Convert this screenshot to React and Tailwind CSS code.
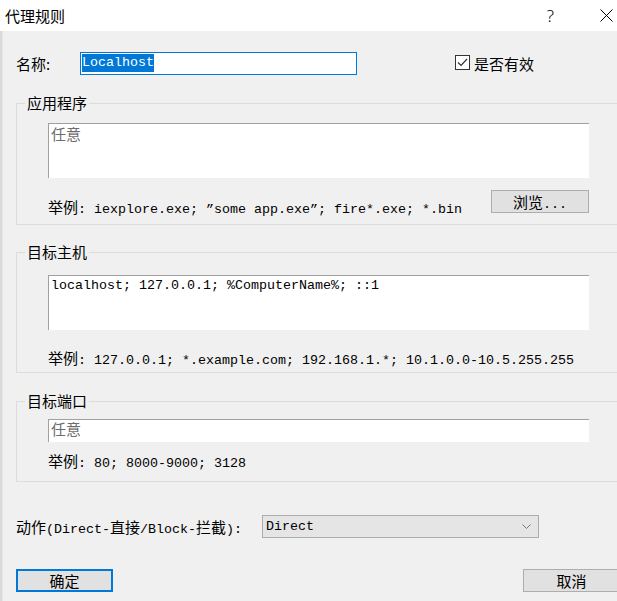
import React from 'react';

const cjk = "font-['Noto_Sans_CJK_SC',sans-serif]";
const mono = "font-['Liberation_Mono','Noto_Sans_CJK_SC',monospace] text-[13.33px] leading-[16px]";

// CJK characters inside the monospace lines are wider than the latin ones
const Zh = ({ children }) => (
  <span className="font-['Noto_Sans_CJK_SC',sans-serif] text-[15px] leading-[16px]">{children}</span>
);

const GroupBox = ({ title, children, className }) => (
  <fieldset className={`w-[625px] border border-[#dcdcdc] ${className}`}>
    <legend className={`ml-[8px] px-[2px] ${cjk} text-[15px] leading-[20px] text-black`}>{title}</legend>
    <div className="pl-[31px]">{children}</div>
  </fieldset>
);

const Box = ({ className, children }) => (
  <div className={`w-[541px] bg-white border-l border-t border-[#a0a0a0] pl-[2px] ${mono} ${className}`}>
    {children}
  </div>
);

export default function App() {
  return (
    <div className="w-[617px] h-[601px] overflow-hidden bg-[#f0f0f0] flex flex-col text-black">
      {/* title bar */}
      <div className="h-[31px] bg-white flex items-center shrink-0">
        <span className={`ml-[5px] ${cjk} text-[15px] leading-[20px]`}>代理规则</span>
        <span className="ml-auto mr-[63px] font-['Noto_Sans',sans-serif] font-light text-[17px] leading-[20px]">?</span>
      </div>
      <svg className="absolute left-[600px] top-[9px]" width="13" height="13" viewBox="0 0 13 13">
        <path d="M0.5 0.5L12.5 12.5M12.5 0.5L0.5 12.5" stroke="#000" strokeWidth="1" />
      </svg>

      <div className="flex flex-1">
        <div className="w-[3px] bg-[#dadada] border-r border-[#e6e6e6] shrink-0" />
        <div className="pl-[13px] flex flex-col">
          {/* name row */}
          <div className="mt-[21px] flex items-center h-[23px]">
            <span className={`w-[64px] ${cjk} text-[15px] leading-[20px]`}>名称:</span>
            <div className={`w-[277px] h-[23px] bg-white border border-[#0078d7] pl-[1px] pt-[1px] ${mono}`}>
              <span className="bg-[#0078d7] text-white inline-block leading-[18px]">Localhost</span>
            </div>
            <div className="ml-[98px] -mt-[2px] w-[15px] h-[15px] border border-[#333333] bg-white flex items-center justify-center">
              <svg width="11" height="9" viewBox="0 0 11 9">
                <path d="M1 4.5L4 7.5L10 1" fill="none" stroke="#333" strokeWidth="1.2" />
              </svg>
            </div>
            <span className={`ml-[4px] ${cjk} text-[15px] leading-[20px]`}>是否有效</span>
          </div>

          {/* applications */}
          <GroupBox title="应用程序" className="mt-[18px]">
            <Box className="mt-[10px] h-[55px] pt-[2px] text-[#6d6d6d]">
              <Zh>任意</Zh>
            </Box>
            <div className="mt-[12px] w-[541px] h-[23px] flex items-start mb-[11px]">
              <div className={`mt-[9px] h-[16px] ${mono}`}>
                <Zh>举例</Zh>: iexplore.exe; ”some app.exe”; fire*.exe; *.bin
              </div>
              <button className="ml-auto w-[98px] h-[23px] bg-[#e1e1e1] border border-[#adadad] flex items-center justify-center">
                <span className={`h-[16px] ${mono}`}><Zh>浏览</Zh>...</span>
              </button>
            </div>
          </GroupBox>

          {/* hosts */}
          <GroupBox title="目标主机" className="mt-[17px]">
            <Box className="mt-[13px] h-[55px] pt-[2px]">
              localhost; 127.0.0.1; %ComputerName%; ::1
            </Box>
            <div className={`mt-[20px] mb-[6px] h-[16px] ${mono}`}>
              <Zh>举例</Zh>: 127.0.0.1; *.example.com; 192.168.1.*; 10.1.0.0-10.5.255.255
            </div>
          </GroupBox>

          {/* ports */}
          <GroupBox title="目标端口" className="mt-[18px]">
            <Box className="mt-[8px] h-[23px] pt-[1px] text-[#6d6d6d]">
              <Zh>任意</Zh>
            </Box>
            <div className={`mt-[11px] mb-[12px] h-[16px] ${mono}`}>
              <Zh>举例</Zh>: 80; 8000-9000; 3128
            </div>
          </GroupBox>

          {/* action */}
          <div className="mt-[33px] flex items-center h-[23px]">
            <span className={`w-[246px] h-[16px] ${mono}`}>
              <Zh>动作</Zh>(Direct-<Zh>直接</Zh>/Block-<Zh>拦截</Zh>):
            </span>
            <div className={`w-[277px] h-[23px] bg-[#e5e5e5] border border-[#adadad] flex items-center pl-[3px] pr-[7px] ${mono}`}>
              <span>Direct</span>
              <svg className="ml-auto" width="9" height="5" viewBox="0 0 9 5">
                <path d="M0.5 0.5L4.5 4.5L8.5 0.5" fill="none" stroke="#777" strokeWidth="1" />
              </svg>
            </div>
          </div>

          {/* buttons */}
          <div className="mt-[31px] flex items-center">
            <button className={`w-[97px] h-[23px] bg-[#e1e1e1] border-2 border-[#0078d7] ${cjk} text-[15px] leading-[18px]`}>
              确定
            </button>
            <button className={`ml-[410px] w-[97px] h-[23px] shrink-0 bg-[#e1e1e1] border border-[#adadad] ${cjk} text-[15px] leading-[18px]`}>
              取消
            </button>
          </div>
        </div>
      </div>
    </div>
  );
}
